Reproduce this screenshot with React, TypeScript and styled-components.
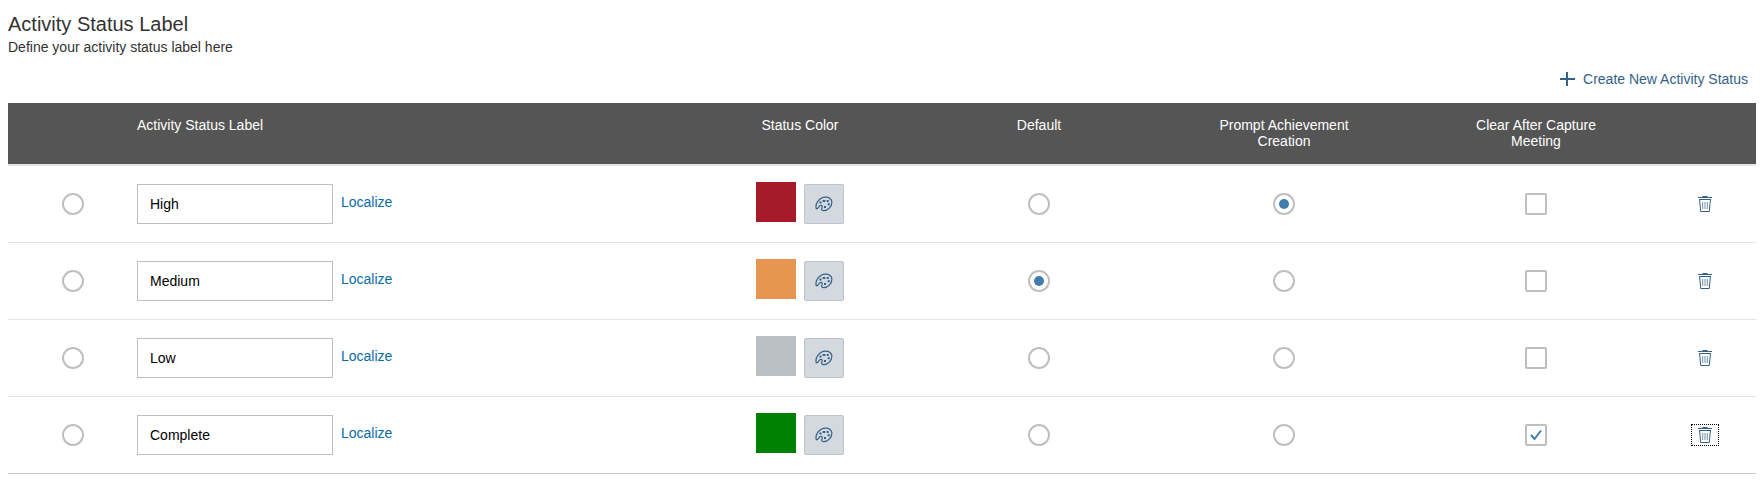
import React, { useState } from 'react';
import styled, { createGlobalStyle } from 'styled-components';

const GlobalStyle = createGlobalStyle`
  *, *::before, *::after { box-sizing: border-box; }
  body {
    margin: 0;
    background: #fff;
    color: #333;
    font-family: "Liberation Sans", Arial, Helvetica, sans-serif;
    font-size: 14px;
    line-height: 20px;
  }
`;

const Page = styled.main`
  padding: 8px 7px 12px 8px;
`;

const Title = styled.h1`
  margin: 0;
  padding-top: 3px;
  font-size: 20px;
  font-weight: 400;
  line-height: 26px;
`;

const Subtitle = styled.p`
  margin: 0;
`;

const Toolbar = styled.div`
  display: flex;
  justify-content: flex-end;
  padding: 6px 8px 8px 0;
`;

const CreateButton = styled.button`
  display: flex;
  align-items: center;
  gap: 8px;
  height: 32px;
  padding: 0;
  border: 0;
  background: transparent;
  color: #346187;
  font: inherit;
  cursor: pointer;
`;

const Table = styled.table`
  width: 100%;
  table-layout: fixed;
  border-collapse: separate;
  border-spacing: 0;
  border-bottom: 1px solid #ccc;
`;

const Col = styled.col<{ $width?: number }>`
  width: ${({ $width }) => ($width ? `${$width}px` : 'auto')};
`;

const HeadCell = styled.th<{ $start?: boolean }>`
  padding: ${({ $start }) => ($start ? '14px 0 15px' : '14px 48px 15px')};
  border-bottom: 2px solid #e5e5e5;
  background: #555;
  color: #fff;
  font-weight: 400;
  line-height: 16px;
  text-align: ${({ $start }) => ($start ? 'left' : 'center')};
  vertical-align: top;
`;

const Row = styled.tr`
  &:not(:last-child) > td { border-bottom: 1px solid #e5e5e5; }
`;

const Cell = styled.td`
  padding: 0;
  text-align: center;
  vertical-align: middle;
`;

const LabelCell = styled(Cell)`
  padding: 18px 0;
`;

const LabelGroup = styled.div`
  display: flex;
  align-items: center;
  gap: 8px;
`;

const TextInput = styled.input`
  width: 196px;
  height: 40px;
  padding: 0 12px;
  border: 1px solid #bfbfbf;
  background: #fff;
  color: #000;
  font: inherit;
`;

const LocalizeLink = styled.a`
  padding-bottom: 4px;
  color: #0a6ba5;
  text-decoration: none;
`;

const ColorGroup = styled.div`
  display: flex;
  align-items: center;
  justify-content: center;
  gap: 8px;
`;

const Swatch = styled.span<{ $color: string }>`
  width: 40px;
  height: 40px;
  margin-bottom: 4px;
  background: ${({ $color }) => $color};
`;

const PaletteButton = styled.button`
  display: flex;
  align-items: center;
  justify-content: center;
  width: 40px;
  height: 40px;
  padding: 0;
  border: 1px solid #bcc3ca;
  border-radius: 2px;
  background: #d3d9df;
  color: #346187;
  cursor: pointer;
`;

const Radio = styled.input.attrs({ type: 'radio' })`
  appearance: none;
  display: block;
  width: 22px;
  height: 22px;
  margin: 0 auto;
  padding: 4px;
  border: 2px solid #bfbfbf;
  border-radius: 50%;
  background: #fff;

  &:checked::before {
    content: '';
    display: block;
    width: 10px;
    height: 10px;
    border-radius: 50%;
    background: #427cac;
  }
`;

const CheckWrap = styled.label`
  display: grid;
  width: 22px;
  margin: 0 auto;

  > * { grid-area: 1 / 1; }
`;

const Checkbox = styled.input.attrs({ type: 'checkbox' })`
  appearance: none;
  width: 22px;
  height: 22px;
  margin: 0;
  border: 2px solid #bfbfbf;
  border-radius: 2px;
  background: #fff;

  & + svg { visibility: hidden; }
  &:checked + svg { visibility: visible; }
`;

const CheckMark = styled.svg`
  place-self: center;
  pointer-events: none;
`;

const DeleteButton = styled.button<{ $active: boolean }>`
  display: flex;
  align-items: center;
  justify-content: center;
  width: 28px;
  height: 22px;
  margin: 0 auto;
  padding: 0;
  border: 1px dotted ${({ $active }) => ($active ? '#000' : 'transparent')};
  outline: none;
  background: transparent;
  color: #346187;
  cursor: pointer;
`;

const PlusIcon = () => (
  <svg width="15" height="14" viewBox="0 0 15 14" aria-hidden="true">
    <path d="M7 0v14M0 7h15" stroke="currentColor" strokeWidth="2" fill="none" />
  </svg>
);

const PaletteIcon = () => (
  <svg width="18" height="16" viewBox="0 0 18 16" aria-hidden="true">
    <path
      d="M1.300 12.800C-.2 7.800 4.200 1.400 10.400 1.200c3.600-.1 6.500 1.800 6.500 5 0 4.400-4.200 8.500-8.100 8.500-1.600 0-2.300-.8-2.100-1.900.2-1 .8-1.900.4-2.800-.4-.8-1.500-.9-2.300-.3-1 .7-1 2.900-3.500 3.100z"
      fill="none"
      stroke="currentColor"
      strokeWidth="1.200"
      strokeLinejoin="round"
    />
    <g fill="currentColor">
      <rect x="4.500" y="5.500" width="2" height="2" />
      <rect x="7.700" y="4" width="2.600" height="2" />
      <rect x="11.700" y="4" width="2" height="2" />
      <rect x="12.700" y="7.200" width="2" height="2" />
      <rect x="9" y="10" width="2" height="2" />
    </g>
  </svg>
);

const TrashIcon = () => (
  <svg width="14" height="16" viewBox="0 0 14 16" fill="none" stroke="currentColor" aria-hidden="true">
    <path d="M4.500.5h5M0 1.500h14M1 3.500h12" />
    <path d="M1.600 3.500l1.100 12h8.600l1.100-12" />
    <path d="M4.700 6v7M7 6v7M9.300 6v7" opacity=".7" />
  </svg>
);

interface StatusLabel {
  id: string;
  name: string;
  color: string;
  clear: boolean;
}

const LABELS: StatusLabel[] = [
  { id: 'high', name: 'High', color: '#a61a28', clear: false },
  { id: 'medium', name: 'Medium', color: '#e69650', clear: false },
  { id: 'low', name: 'Low', color: '#b9c1c4', clear: false },
  { id: 'complete', name: 'Complete', color: '#008000', clear: true },
];

export default function App() {
  const [focused, setFocused] = useState('complete');

  return (
    <>
      <GlobalStyle />
      <Page>
        <Title>Activity Status Label</Title>
        <Subtitle>Define your activity status label here</Subtitle>
        <Toolbar>
          <CreateButton type="button">
            <PlusIcon />
            Create New Activity Status
          </CreateButton>
        </Toolbar>
        <Table>
          <colgroup>
            <Col $width={129} />
            <Col />
            <Col $width={256} />
            <Col $width={222} />
            <Col $width={268} />
            <Col $width={236} />
            <Col $width={102} />
          </colgroup>
          <thead>
            <tr>
              <HeadCell />
              <HeadCell $start scope="col">Activity Status Label</HeadCell>
              <HeadCell scope="col">Status Color</HeadCell>
              <HeadCell scope="col">Default</HeadCell>
              <HeadCell scope="col">Prompt Achievement Creation</HeadCell>
              <HeadCell scope="col">Clear After Capture Meeting</HeadCell>
              <HeadCell />
            </tr>
          </thead>
          <tbody>
            {LABELS.map(({ id, name, color, clear }) => (
              <Row key={id}>
                <Cell>
                  <Radio name="selected" aria-label={`Select ${name}`} />
                </Cell>
                <LabelCell>
                  <LabelGroup>
                    <TextInput type="text" defaultValue={name} aria-label="Activity Status Label" />
                    <LocalizeLink href="#localize">Localize</LocalizeLink>
                  </LabelGroup>
                </LabelCell>
                <Cell>
                  <ColorGroup>
                    <Swatch $color={color} />
                    <PaletteButton type="button" aria-label={`Choose color for ${name}`}>
                      <PaletteIcon />
                    </PaletteButton>
                  </ColorGroup>
                </Cell>
                <Cell>
                  <Radio name="default" defaultChecked={id === 'medium'} aria-label={`${name} is default`} />
                </Cell>
                <Cell>
                  <Radio name="prompt" defaultChecked={id === 'high'} aria-label={`${name} prompts achievement creation`} />
                </Cell>
                <Cell>
                  <CheckWrap>
                    <Checkbox defaultChecked={clear} aria-label={`Clear ${name} after capture meeting`} />
                    <CheckMark width="12" height="12" viewBox="0 0 12 12" aria-hidden="true">
                      <path d="M1 6l3.500 4L11 1.500" fill="none" stroke="#427cac" strokeWidth="2" />
                    </CheckMark>
                  </CheckWrap>
                </Cell>
                <Cell>
                  <DeleteButton
                    type="button"
                    $active={focused === id}
                    onFocus={() => setFocused(id)}
                    aria-label={`Delete ${name}`}
                  >
                    <TrashIcon />
                  </DeleteButton>
                </Cell>
              </Row>
            ))}
          </tbody>
        </Table>
      </Page>
    </>
  );
}
